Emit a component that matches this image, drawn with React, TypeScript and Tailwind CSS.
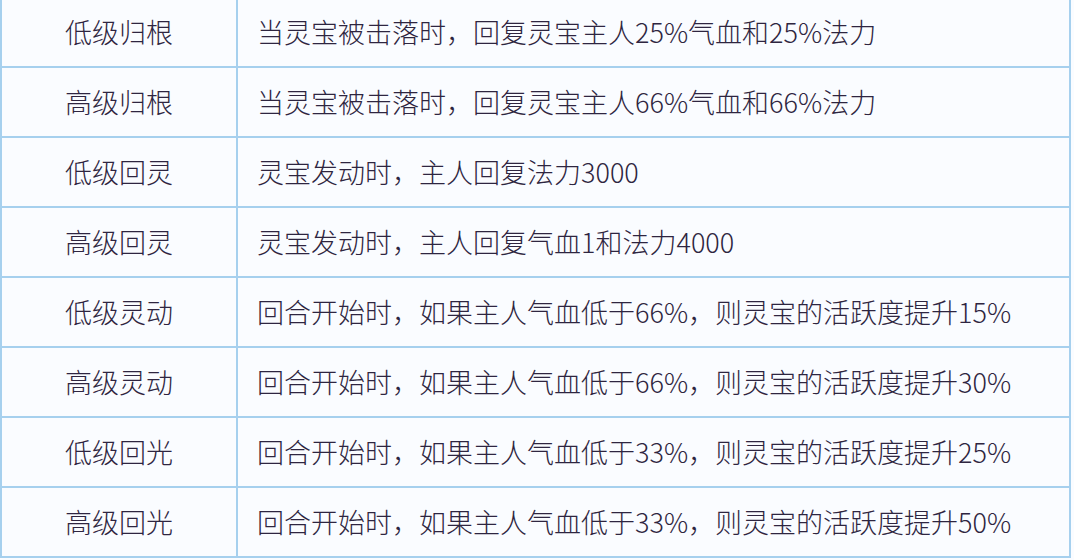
const rows: [string, string][] = [
  ["低级归根", "当灵宝被击落时，回复灵宝主人25%气血和25%法力"],
  ["高级归根", "当灵宝被击落时，回复灵宝主人66%气血和66%法力"],
  ["低级回灵", "灵宝发动时，主人回复法力3000"],
  ["高级回灵", "灵宝发动时，主人回复气血1和法力4000"],
  ["低级灵动", "回合开始时，如果主人气血低于66%，则灵宝的活跃度提升15%"],
  ["高级灵动", "回合开始时，如果主人气血低于66%，则灵宝的活跃度提升30%"],
  ["低级回光", "回合开始时，如果主人气血低于33%，则灵宝的活跃度提升25%"],
  ["高级回光", "回合开始时，如果主人气血低于33%，则灵宝的活跃度提升50%"],
];

export default function App() {
  return (
    <div
      className="h-[560px] w-[1074px] overflow-hidden bg-[#fafcff] text-[27px] font-light text-[#2e2540]"
      style={{ fontFamily: '"Noto Sans CJK SC", "Noto Sans", sans-serif' }}
    >
      <div className="-mt-[4px] grid w-[1071px] grid-cols-[236px_833px] border-l-2 border-t-2 border-[#a6d0ee]">
        {rows.map(([name, desc]) => (
          <div key={name} className="contents">
            <div className="flex h-[70px] items-center justify-center border-b-2 border-r-2 border-[#a6d0ee]">
              {name}
            </div>
            <div className="flex h-[70px] items-center border-b-2 border-r-2 border-[#a6d0ee] pl-[19px]">
              {desc}
            </div>
          </div>
        ))}
      </div>
    </div>
  );
}
